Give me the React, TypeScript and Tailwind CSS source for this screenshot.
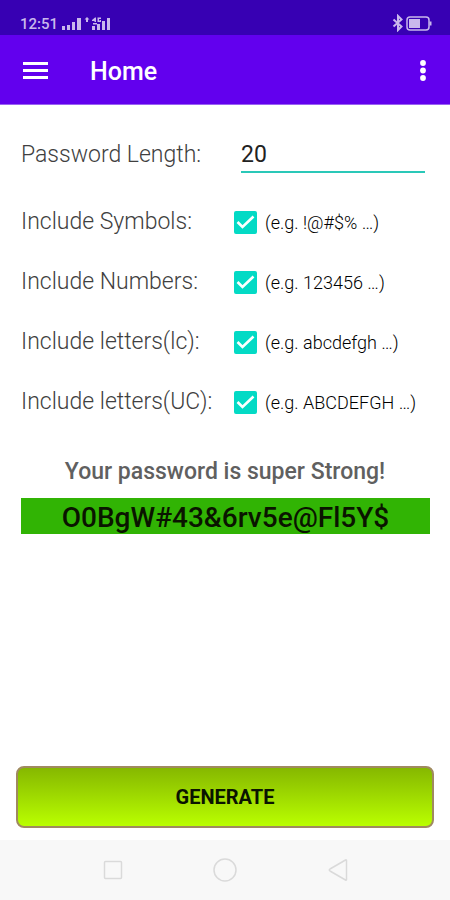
import { useState } from "react";

const OPTIONS = [
  { id: "symbols", label: "Include Symbols:", example: "(e.g. !@#$% …)" },
  { id: "numbers", label: "Include Numbers:", example: "(e.g. 123456 …)" },
  { id: "lower", label: "Include letters(lc):", example: "(e.g. abcdefgh …)" },
  { id: "upper", label: "Include letters(UC):", example: "(e.g. ABCDEFGH …)" },
];

function StatusBar() {
  return (
    <div className="flex h-[35px] items-end justify-between bg-[#3700b3] pr-[18px] pb-[3px] pl-5 text-[#c9b8ec]">
      <div className="flex items-center gap-1">
        <span className="text-[15px] leading-4 font-medium">12:51</span>
        <svg width="50" height="16" viewBox="0 0 50 16" fill="currentColor" aria-hidden="true">
          <path d="M0 10h3v4H0zM5 9h3v5H5zM10 6h3v8h-3zM15 2h4v12h-4z" />
          <path d="M25 1l2.500 2.500H26V6h-2V3.500h-1.500zM30 4l3-2.500h1V6h-1.500V5H30zM35.500 1.500H39V3h-2v1.500h1V4h1v2h-3.500zM30 10h3v4h-3zM35 8h3v6h-3zM40 5h3v9h-3zM45 2h3v12h-3zM31 7h4v1.500h-4z" />
        </svg>
      </div>
      <svg width="40" height="18" viewBox="0 0 40 18" fill="none" stroke="currentColor" aria-hidden="true">
        <path d="M1.500 5.500l8 7L6 16V2l3.500 3.500-8 7" strokeWidth="2" />
        <rect x="15" y="3" width="22" height="13" rx="3" strokeWidth="1.500" />
        <rect x="17" y="5" width="11" height="9" fill="currentColor" stroke="none" />
        <path d="M38.500 7.500v4" strokeWidth="2" />
      </svg>
    </div>
  );
}

function AppBar() {
  return (
    <header className="flex h-[70px] items-center border-b border-[#9a62f2] bg-[#6200ee] pt-1 pr-4 pl-[23px] text-white">
      <button type="button" aria-label="Open menu" className="pb-1">
        <svg width="25" height="18" viewBox="0 0 25 18" fill="currentColor">
          <path d="M0 1h25v3H0zM0 8h25v3H0zM0 15h25v3H0z" />
        </svg>
      </button>
      <h1 className="ml-[42px] flex-1 text-[25px] leading-8 font-medium">Home</h1>
      <button type="button" aria-label="More options" className="px-2 pb-1">
        <svg width="6" height="22" viewBox="0 0 6 22" fill="currentColor">
          <circle cx="3" cy="4" r="2.900" />
          <circle cx="3" cy="11.500" r="2.900" />
          <circle cx="3" cy="19" r="2.900" />
        </svg>
      </button>
    </header>
  );
}

function NavigationBar() {
  return (
    <nav className="grid h-[60px] grid-cols-3 items-center justify-items-center bg-[#f8f8f8] px-[12.5%] text-[#dadada]">
      <button type="button" aria-label="Recent apps">
        <svg width="24" height="24" viewBox="0 0 24 24" fill="none" stroke="currentColor" strokeWidth="1.500">
          <rect x="3.500" y="3.500" width="17" height="17" rx="1" />
        </svg>
      </button>
      <button type="button" aria-label="Home screen">
        <svg width="24" height="24" viewBox="0 0 24 24" fill="none" stroke="currentColor" strokeWidth="1.500">
          <circle cx="12" cy="12" r="11" />
        </svg>
      </button>
      <button type="button" aria-label="Back">
        <svg width="24" height="24" viewBox="0 0 24 24" fill="none" stroke="currentColor" strokeWidth="1.500" strokeLinejoin="round">
          <path d="M20.500 2.500v19q0 1-1 .500L4 13q-1.500-1 0-2L19.500 2q1-.500 1 .500z" />
        </svg>
      </button>
    </nav>
  );
}

export default function App() {
  const [length, setLength] = useState("20");
  const [enabled, setEnabled] = useState<Record<string, boolean>>({
    symbols: true,
    numbers: true,
    lower: true,
    upper: true,
  });

  return (
    <div className="flex min-h-screen flex-col bg-white font-[Roboto,sans-serif]">
      <StatusBar />
      <AppBar />
      <main className="flex flex-1 flex-col">
        <form className="flex flex-1 flex-col" onSubmit={(e) => e.preventDefault()}>
          <div className="mt-3 flex h-[75px] items-center pr-[25px] pl-[21px]">
            <label htmlFor="length" className="w-[220px] text-[23px] leading-8 font-light text-[#404040]">
              Password Length:
            </label>
            <input
              id="length"
              type="text"
              inputMode="numeric"
              value={length}
              onChange={(e) => setLength(e.target.value)}
              className="h-9 min-w-0 flex-1 border-b-2 border-[#2ac8b8] pt-0.5 text-[23px] leading-8 text-[#222] outline-none"
            />
          </div>
          {OPTIONS.map(({ id, label, example }) => (
            <div key={id} className="flex h-[60px] items-center pl-[21px]">
              <label htmlFor={id} className="w-[213px] text-[23px] leading-8 font-light text-[#404040]">
                {label}
              </label>
              <span className="grid size-[23px]">
                <input
                  id={id}
                  type="checkbox"
                  checked={enabled[id]}
                  onChange={() => setEnabled({ ...enabled, [id]: !enabled[id] })}
                  className="peer col-start-1 row-start-1 size-[23px] appearance-none rounded-xs border-2 border-[#03dac5] checked:bg-[#03dac5]"
                />
                <svg
                  className="pointer-events-none invisible col-start-1 row-start-1 peer-checked:visible"
                  width="23"
                  height="23"
                  viewBox="0 0 23 23"
                  fill="none"
                  stroke="white"
                  strokeWidth="2.600"
                  aria-hidden="true"
                >
                  <path d="M3.500 11l5 5L19.500 5.500" />
                </svg>
              </span>
              <label htmlFor={id} className="ml-2 pt-0.5 text-[18px] leading-6 font-light text-black">
                {example}
              </label>
            </div>
          ))}
          <p className="mt-6 text-center text-[23px] leading-8 font-medium text-[#606060]">
            Your password is super Strong!
          </p>
          <output className="mt-2.5 mr-5 ml-[21px] block h-9 bg-[#31b404] pt-0.5 text-center text-[28px] leading-9 font-medium text-[#0a1400]">
            O0BgW#43&amp;6rv5e@Fl5Y$
          </output>
          <button
            type="submit"
            className="mx-4 mt-auto mb-3 h-[62px] rounded-lg border-2 border-[#a08a60] bg-linear-to-b from-[#86b800] to-[#baff00] text-[20px] font-bold text-[#0a1400]"
          >
            GENERATE
          </button>
        </form>
      </main>
      <NavigationBar />
    </div>
  );
}
